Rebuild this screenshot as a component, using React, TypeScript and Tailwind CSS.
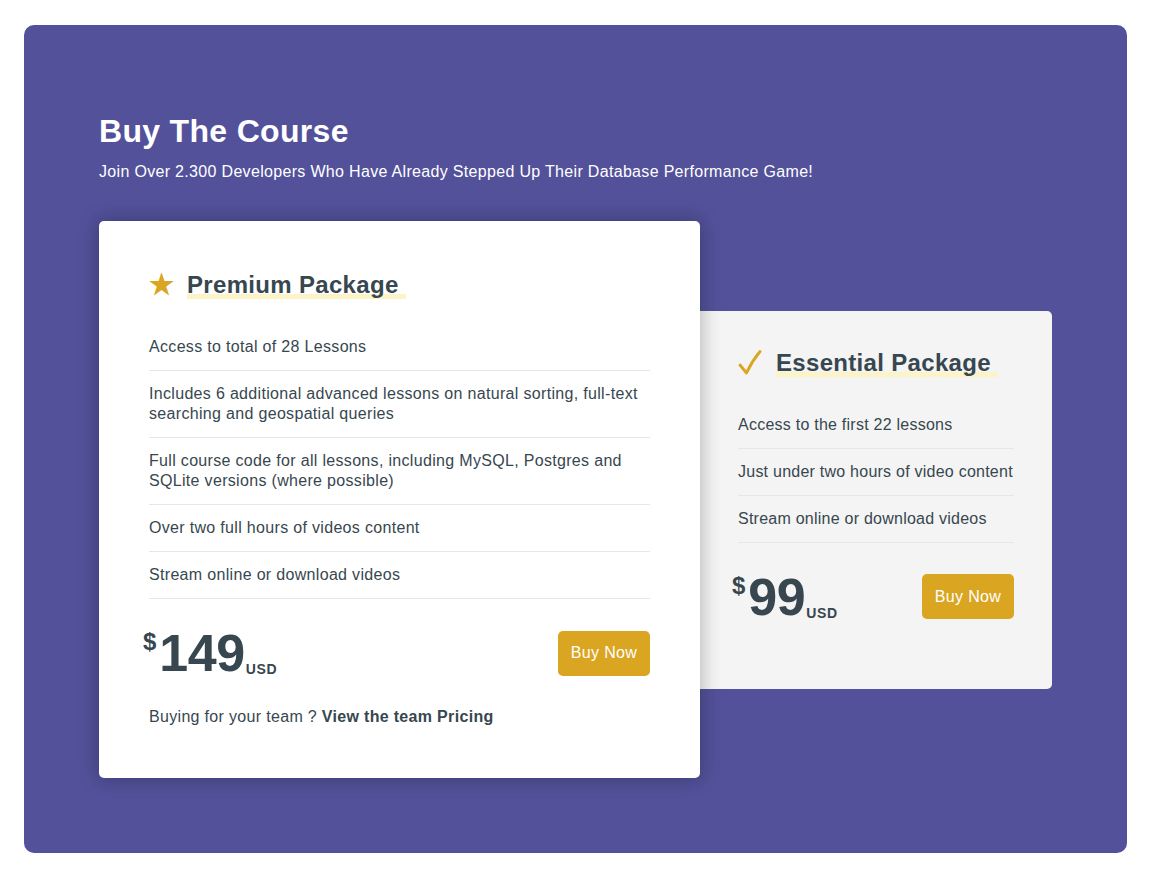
import React from 'react';

interface PackageProps {
  icon: React.ReactNode;
  title: string;
  items: string[];
  price: string;
  featured?: boolean;
}

const font = { fontFamily: '"Liberation Sans", Arial, sans-serif' };

const PackageCard: React.FC<PackageProps> = ({ icon, title, items, price, featured = false }) => {
  return (
    <div
      className={
        featured
          ? 'relative z-10 w-[601px] shrink-0 rounded-[5px] bg-white px-[50px] pt-[50px] pb-[51px] shadow-[0_0_20px_rgba(0,0,0,0.3)]'
          : 'relative w-[352px] shrink-0 rounded-r-[5px] bg-[#f4f4f4] px-[38px] pt-[38px] pb-[69px]'
      }
    >
      {/* Title */}
      <h2 className="flex h-[28px] items-center text-[24px] font-bold leading-[28px] text-[#37474f]">
        <span className="w-[38px] shrink-0">{icon}</span>
        <span className="bg-[linear-gradient(to_top,#fcf3c6_5px,transparent_5px)] pr-[7px]">{title}</span>
      </h2>

      {/* Features */}
      <ul className="mt-[25px]">
        {items.map((item) => (
          <li
            key={item}
            className={`border-b border-[#e6e6e6] py-[13px] text-[16px] leading-[20px] text-[#37474f] ${
              featured ? '' : 'whitespace-nowrap tracking-[0.015em]'
            }`}
          >
            {item}
          </li>
        ))}
      </ul>

      {/* Price */}
      <div className="mt-[31px] flex items-center justify-between">
        <div className="-ml-[6px] flex items-end font-bold tracking-normal text-[#37464f]">
          <span className="self-start text-[24px] leading-[24px]">$</span>
          <span className="ml-[3px] text-[52px] leading-[46px] tracking-[-0.5px]">{price}</span>
          <span className="ml-[1px] text-[14px] leading-[14px] tracking-[0.05em]">USD</span>
        </div>
        <button className="h-[45px] w-[92px] rounded-[5px] bg-[#daa520] text-[16px] tracking-[0.02em] text-white">
          Buy Now
        </button>
      </div>

      {featured && (
        <p className="mt-[31px] text-[16px] leading-[20px] text-[#37474f]">
          Buying for your team ? <span className="font-bold">View the team Pricing</span>
        </p>
      )}
    </div>
  );
};

export default function App() {
  return (
    <div className="min-h-[875px] bg-white px-[24px] pt-[25px] tracking-[0.02em]" style={font}>
      <div className="w-[1103px] rounded-[10px] bg-[#52519a] px-[75px] pt-[87px] pb-[75px]">
        <h1 className="text-[32px] font-bold leading-[38px] text-white">Buy The Course</h1>
        <p className="mt-[12px] text-[16px] leading-[20px] text-white">
          Join Over 2.300 Developers Who Have Already Stepped Up Their Database Performance Game!
        </p>

        <div className="mt-[39px] flex items-center">
          <PackageCard
            featured
            icon={<span className="text-[28px] leading-[28px] text-[#daa520]">★</span>}
            title="Premium Package"
            price="149"
            items={[
              'Access to total of 28 Lessons',
              'Includes 6 additional advanced lessons on natural sorting, full-text searching and geospatial queries',
              'Full course code for all lessons, including MySQL, Postgres and SQLite versions (where possible)',
              'Over two full hours of videos content',
              'Stream online or download videos',
            ]}
          />
          <PackageCard
            icon={
              <svg width="24" height="26" viewBox="0 0 24 26" className="block">
                <path
                  d="M2 15 L8.5 23 Q14 11 22 1.5"
                  fill="none"
                  stroke="#daa520"
                  strokeWidth="2.8"
                  strokeLinecap="round"
                  strokeLinejoin="round"
                />
              </svg>
            }
            title="Essential Package"
            price="99"
            items={[
              'Access to the first 22 lessons',
              'Just under two hours of video content',
              'Stream online or download videos',
            ]}
          />
        </div>
      </div>
    </div>
  );
}
